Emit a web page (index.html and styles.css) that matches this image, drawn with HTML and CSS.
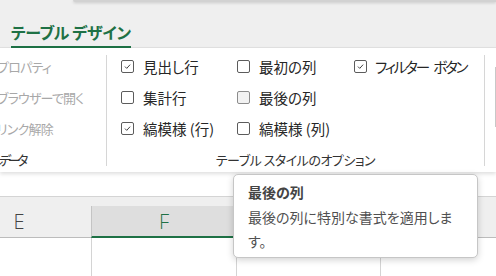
FILE: index.html
```html
<!DOCTYPE html>
<html lang="ja">
<head>
    <meta charset="UTF-8">
    <title>テーブル デザイン</title>
    <link rel="stylesheet" href="styles.css">
</head>
<body>
<div id="tabbar">
    <div id="topedge"></div>
    <div class="tab">テーブル デザイン</div>
</div>
<div id="ribbon">
    <div class="group group-data">
        <div class="cmds">
            <div class="cmd">プロパティ</div>
            <div class="cmd">ブラウザーで開く</div>
            <div class="cmd">リンク解除</div>
        </div>
        <div class="glabel">外部のテーブル データ</div>
    </div>
    <div class="sep"></div>
    <div class="group group-opts">
        <div class="opts">
            <div class="opt"><span class="box on"><svg viewBox="0 0 13 13"><path d="M3.5 6.6l2.1 2.1 4-4.4"/></svg></span>見出し行</div>
            <div class="opt"><span class="box"></span>最初の列</div>
            <div class="opt kana"><span class="box on"><svg viewBox="0 0 13 13"><path d="M3.5 6.6l2.1 2.1 4-4.4"/></svg></span>フィルター ボタン</div>
            <div class="opt"><span class="box"></span>集計行</div>
            <div class="opt"><span class="box hover"></span>最後の列</div>
            <div class="opt"></div>
            <div class="opt"><span class="box on"><svg viewBox="0 0 13 13"><path d="M3.5 6.6l2.1 2.1 4-4.4"/></svg></span>縞模様 (行)</div>
            <div class="opt"><span class="box"></span>縞模様 (列)</div>
            <div class="opt"></div>
        </div>
        <div class="glabel">テーブル スタイルのオプション</div>
    </div>
    <div class="sep"></div>
    <div class="next"></div>
</div>
<div id="sheet">
    <div class="colheads">
        <div class="col col-e">E</div>
        <div class="col col-f sel">F</div>
        <div class="col col-g"></div>
        <div class="col col-h"></div>
    </div>
    <div class="cells">
        <div class="col col-e"></div>
        <div class="col col-f"></div>
        <div class="col col-g"></div>
        <div class="col col-h"></div>
    </div>
</div>
<div id="tip">
    <div class="tip-title">最後の列</div>
    <div class="tip-text">最後の列に特別な書式を適用します。</div>
</div>
</body>
</html>
```

FILE: styles.css
```css
*{
    margin: 0;
    padding: 0;
    box-sizing: border-box;
}
body{
    width: 496px;
    height: 276px;
    overflow: hidden;
    position: relative;
    background: #fff;
    font-family: "Noto Sans CJK JP", "Noto Sans", sans-serif;
    font-feature-settings: "palt";
    color: #262626;
}
#tabbar{
    height: 48px;
    background: #efefef;
    border-bottom: 1px solid #e2e2e2;
    padding: 20px 0 0 11px;
}
#topedge{
    position: absolute;
    top: 0;
    left: 73px;
    right: 0;
    height: 2px;
    background: #d2d2d2;
    border-bottom-left-radius: 4px;
    box-shadow: 0 1px 3px rgba(0,0,0,.18);
}
.tab{
    display: inline-block;
    font-size: 16px;
    font-weight: bold;
    line-height: 22px;
    letter-spacing: -0.4px;
    color: #1e7145;
    padding-bottom: 3px;
    border-bottom: 3px solid #1e7145;
    border-radius: 0 0 1px 1px;
}
#ribbon{
    height: 124px;
    display: flex;
    background: #fff;
    position: relative;
    z-index: 1;
    box-shadow: 0 2px 4px rgba(0,0,0,.13);
}
.group{
    display: flex;
    flex-direction: column;
    flex-shrink: 0;
    padding-top: 3px;
}
.group-data{
    width: 106px;
}
.cmds{
    margin-left: -3px;
}
.cmd{
    height: 31px;
    line-height: 31px;
    font-size: 13px;
    letter-spacing: -0.8px;
    color: #a8a8a8;
    white-space: nowrap;
}
.glabel{
    margin-top: 4px;
    line-height: 24px;
    font-size: 13px;
    letter-spacing: -0.5px;
    color: #333;
    white-space: nowrap;
    text-align: center;
}
.group-data .glabel{
    display: flex;
    justify-content: flex-end;
    padding-right: 81px;
    letter-spacing: -3.5px;
}
.sep{
    width: 1px;
    flex-shrink: 0;
    background: #d6d6d6;
    margin: 7px 0 6px;
}
.group-opts{
    width: 377px;
}
.opts{
    display: grid;
    grid-template-columns: 116px 117px auto;
    grid-auto-rows: 31px;
    padding-left: 14px;
}
.opt{
    display: flex;
    align-items: center;
    font-size: 14.5px;
    white-space: pre;
}
.opt.kana{
    letter-spacing: -2.1px;
    word-spacing: 4px;
}
.box{
    width: 13px;
    height: 13px;
    border: 1px solid #5c5c5c;
    border-radius: 2px;
    margin-right: 9px;
    display: flex;
    flex-shrink: 0;
}
.kana .box{
    margin-right: 8px;
}
.box svg{
    width: 11px;
    height: 11px;
    fill: none;
    stroke: #333;
    stroke-width: 1.1;
}
.box.hover{
    background: #f2f2f2;
    border-color: #8c8c8c;
}
.next{
    width: 20px;
    height: 60px;
    flex-shrink: 0;
    margin: 19px 0 0 10px;
    background: #f4f4f4;
    border: 1px solid #c8c8c8;
}
#sheet{
    padding-top: 24px;
}
.colheads{
    display: flex;
    align-items: flex-end;
    height: 42px;
    background: #efefef;
    border-top: 1px solid #d4d4d4;
}
.col{
    flex-shrink: 0;
}
.col-e{
    width: 144px;
    margin-left: -53px;
}
.col-f{
    width: 145px;
    border-left: 1px solid #d4d4d4;
}
.col-g{
    width: 144px;
    border-left: 1px solid #d4d4d4;
}
.col-h{
    width: 144px;
    border-left: 1px solid #d4d4d4;
}
.colheads .col{
    height: 32px;
    line-height: 31px;
    text-align: center;
    font-family: "Open Sans", sans-serif;
    font-weight: 300;
    font-size: 20px;
    color: #444;
    border-bottom: 1px solid #bcbcbc;
}
.colheads .col-f{
    border-left-color: #c4c4c4;
}
.colheads .sel{
    background: #dedede;
    color: #1e7145;
    border-bottom: 2px solid #1e7145;
}
.cells{
    display: flex;
    height: 60px;
}
#tip{
    position: absolute;
    left: 233px;
    top: 174px;
    width: 245px;
    height: 84px;
    background: #fff;
    border: 1px solid #c6c6c6;
    border-radius: 5px;
    box-shadow: 0 2px 7px rgba(0,0,0,.18);
    padding: 5px 10px 0 14px;
    z-index: 2;
}
.tip-title{
    font-size: 14px;
    font-weight: bold;
    line-height: 24px;
    color: #444;
    margin-bottom: 1px;
}
.tip-text{
    font-size: 14px;
    line-height: 24px;
    color: #505050;
}
```
